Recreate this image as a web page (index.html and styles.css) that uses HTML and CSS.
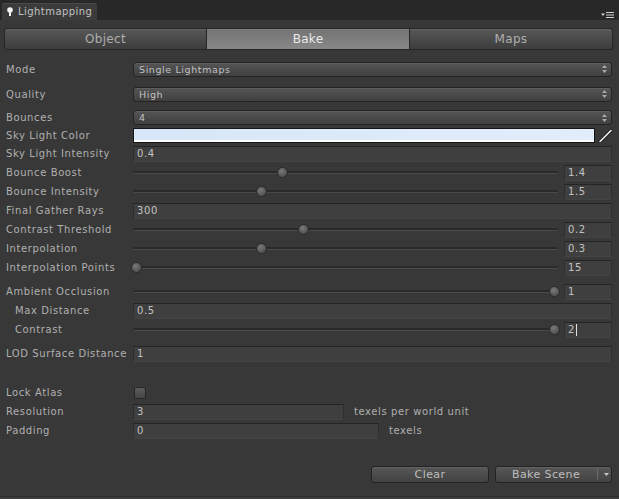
FILE: index.html
```html
<!DOCTYPE html>
<html>
<head>
<meta charset="utf-8">
<title>Lightmapping</title>
<link rel="stylesheet" href="styles.css">
</head>
<body>
<div class="window">
  <div class="tabstrip">
    <div class="wtab">
      <svg class="bulb" width="6" height="10" viewBox="0 0 6 10"><circle cx="3" cy="3" r="2.8" fill="#f2f2f2"/><rect x="2" y="5" width="2" height="4" fill="#f2f2f2"/></svg>
      <span>Lightmapping</span>
    </div>
    <svg class="menu" width="13" height="6" viewBox="0 0 13 6"><path d="M0 1.5h4L2 4z" fill="#d0d0d0"/><rect x="5" y="0" width="8" height="1" fill="#d0d0d0"/><rect x="5" y="2.5" width="8" height="1" fill="#d0d0d0"/><rect x="5" y="5" width="8" height="1" fill="#d0d0d0"/></svg>
  </div>

  <div class="toolbar">
    <div class="tb first">Object</div>
    <div class="tb on">Bake</div>
    <div class="tb last">Maps</div>
  </div>

  <div class="form">
    <div class="row h20"><span class="lbl">Mode</span><div class="popup"><span>Single Lightmaps</span><svg class="updn" width="5" height="8" viewBox="0 0 5 8"><path d="M0 3h5L2.5 0z M0 5h5L2.5 8z" fill="#a8a8a8"/></svg></div></div>
    <div class="row h20 mt5"><span class="lbl">Quality</span><div class="popup"><span>High</span><svg class="updn" width="5" height="8" viewBox="0 0 5 8"><path d="M0 3h5L2.5 0z M0 5h5L2.5 8z" fill="#a8a8a8"/></svg></div></div>
    <div class="row mt4"><span class="lbl">Bounces</span><div class="popup"><span>4</span><svg class="updn" width="5" height="8" viewBox="0 0 5 8"><path d="M0 3h5L2.5 0z M0 5h5L2.5 8z" fill="#a8a8a8"/></svg></div></div>
    <div class="row h17"><span class="lbl">Sky Light Color</span><div class="color"><div class="swatch"></div><div class="alpha"></div></div>
      <svg class="picker" width="15" height="15" viewBox="0 0 15 15"><path d="M2 13.5L13 2.5" stroke="#1e1e1e" stroke-width="3.2" stroke-linecap="round"/><path d="M2 13.5L13 2.5" stroke="#f4f4f4" stroke-width="1.6" stroke-linecap="round"/></svg>
    </div>
    <div class="row"><span class="lbl">Sky Light Intensity</span><div class="field grow">0.4</div></div>
    <div class="row"><span class="lbl">Bounce Boost</span><div class="slider"><div class="track"></div><div class="knob" style="--p:0.35"></div></div><div class="field num">1.4</div></div>
    <div class="row"><span class="lbl">Bounce Intensity</span><div class="slider"><div class="track"></div><div class="knob" style="--p:0.3"></div></div><div class="field num">1.5</div></div>
    <div class="row"><span class="lbl">Final Gather Rays</span><div class="field grow">300</div></div>
    <div class="row"><span class="lbl">Contrast Threshold</span><div class="slider"><div class="track"></div><div class="knob" style="--p:0.4"></div></div><div class="field num">0.2</div></div>
    <div class="row"><span class="lbl">Interpolation</span><div class="slider"><div class="track"></div><div class="knob" style="--p:0.3"></div></div><div class="field num">0.3</div></div>
    <div class="row"><span class="lbl">Interpolation Points</span><div class="slider"><div class="track"></div><div class="knob" style="--p:0"></div></div><div class="field num">15</div></div>

    <div class="row mt5"><span class="lbl">Ambient Occlusion</span><div class="slider"><div class="track"></div><div class="knob" style="--p:1"></div></div><div class="field num">1</div></div>
    <div class="row"><span class="lbl ind">Max Distance</span><div class="field grow">0.5</div></div>
    <div class="row"><span class="lbl ind">Contrast</span><div class="slider"><div class="track"></div><div class="knob" style="--p:1"></div></div><div class="field num">2<span class="caret"></span></div></div>

    <div class="row mt5"><span class="lbl">LOD Surface Distance</span><div class="field grow">1</div></div>

    <div class="row mt20"><span class="lbl">Lock Atlas</span><div class="check"></div></div>
    <div class="row"><span class="lbl">Resolution</span><div class="field w211">3</div><span class="suffix">texels per world unit</span></div>
    <div class="row"><span class="lbl">Padding</span><div class="field w246">0</div><span class="suffix">texels</span></div>
  </div>

  <div class="actions">
    <div class="btn clear">Clear</div>
    <div class="btn split"><span class="btxt">Bake Scene</span><span class="sep"></span><svg class="dd" width="5" height="3" viewBox="0 0 5 3"><path d="M0 0h5L2.5 3z" fill="#c8c8c8"/></svg></div>
  </div>
  <div class="footline"></div>
</div>
</body>
</html>
```

FILE: styles.css
```css
html, body {
  margin: 0;
  padding: 0;
}
body {
  background: #383838;
  font-family: "DejaVu Sans", "Liberation Sans", sans-serif;
  font-size: 10px;
  letter-spacing: 0.6px;
  color: #b0b0b0;
}
.window {
  width: 619px;
  height: 499px;
  overflow: hidden;
  display: flex;
  flex-direction: column;
  background: #383838;
}

/* window tab strip */
.tabstrip {
  height: 20px;
  background: #282828;
  display: flex;
  align-items: flex-end;
  justify-content: space-between;
  padding-left: 2px;
  padding-right: 5px;
  box-sizing: border-box;
  flex: none;
}
.wtab {
  width: 95px;
  height: 17px;
  background: #3b3b3b;
  border-radius: 3px 3px 0 0;
  box-shadow: inset 0 1px 0 #4a4a4a;
  display: flex;
  align-items: center;
  padding-left: 5px;
  gap: 5px;
  box-sizing: border-box;
  color: #c2c2c2;
  letter-spacing: 0.45px;
}
.bulb { flex: none; }
.menu {
  align-self: flex-start;
  margin-top: 12px;
}

/* toolbar */
.toolbar {
  margin: 8px 6px 0 4px;
  height: 22px;
  display: grid;
  grid-template-columns: 1fr 1fr 1fr;
  flex: none;
}
.tb {
  display: flex;
  align-items: center;
  justify-content: center;
  font-size: 12px;
  letter-spacing: 0.3px;
  color: #aeaeae;
  background: linear-gradient(#575757, #3d3d3d);
  border: 1px solid #262626;
  border-left: none;
  box-shadow: inset 0 1px 0 #636363;
}
.tb.first {
  border-left: 1px solid #262626;
  border-radius: 3px 0 0 3px;
}
.tb.last { border-radius: 0 3px 3px 0; }
.tb.on {
  background: linear-gradient(#737373, #888888);
  color: #eaeaea;
  box-shadow: inset 0 1px 0 #7e7e7e;
}

/* form rows */
.form {
  margin-top: 9px;
  display: flex;
  flex-direction: column;
  flex: none;
}
.row {
  height: 19px;
  display: flex;
  align-items: center;
  padding: 0 7px 0 5px;
  flex: none;
}
.h20 { height: 20px; }
.h17 { height: 17px; }
.mt4 { margin-top: 4px; }
.mt5 { margin-top: 5px; }
.mt20 { margin-top: 20px; }
.lbl {
  width: 128px;
  flex: none;
  white-space: nowrap;
  padding-left: 1px;
  box-sizing: border-box;
}
.lbl.ind { padding-left: 10px; }

.popup {
  flex: 1;
  height: 15px;
  box-sizing: border-box;
  border: 1px solid #232323;
  border-radius: 3px;
  background: linear-gradient(#555555, #404040);
  box-shadow: inset 0 1px 0 #5e5e5e;
  display: flex;
  align-items: center;
  justify-content: space-between;
  padding: 0 4px 0 5px;
  color: #c0c0c0;
  font-size: 9.5px;
}
.updn { flex: none; }

.color {
  flex: 1;
  height: 15px;
  box-sizing: border-box;
  border: 1px solid #151515;
  display: flex;
  flex-direction: column;
  background: #dbe8f9;
}
.swatch {
  flex: 1;
  background: linear-gradient(90deg, #d7e6f8, #e2edfb);
}
.alpha {
  height: 2px;
  background: #ffffff;
}
.picker {
  flex: none;
  margin-left: 3px;
  margin-right: -1px;
}

.field {
  height: 16px;
  box-sizing: border-box;
  background: #3f3f3f;
  border: 1px solid #2e2e2e;
  border-top-color: #242424;
  border-bottom-color: #444444;
  padding: 0 3px;
  line-height: 14px;
  color: #c2c2c2;
  white-space: nowrap;
  display: flex;
  align-items: center;
}
.grow { flex: 1; }
.num {
  width: 48px;
  flex: none;
  margin-left: 6px;
}
.w211 { width: 211px; flex: none; }
.w246 { width: 246px; flex: none; }
.suffix {
  margin-left: 10px;
  white-space: nowrap;
  color: #b0b0b0;
}
.caret {
  display: inline-block;
  width: 1px;
  height: 12px;
  background: #e0e0e0;
  margin-left: 1px;
}

.slider {
  flex: 1;
  height: 19px;
  position: relative;
  display: flex;
  align-items: center;
}
.track {
  width: 100%;
  height: 3px;
  box-sizing: border-box;
  background: #2a2a2a;
  border-bottom: 1px solid #4a4a4a;
  border-radius: 2px;
}
.knob {
  position: absolute;
  top: 4px;
  left: calc(var(--p) * (100% - 7px) - 2px);
  width: 11px;
  height: 11px;
  box-sizing: border-box;
  border-radius: 50%;
  border: 1px solid #2a2a2a;
  background: radial-gradient(circle at 40% 35%, #7a7a7a, #575757 60%, #474747);
}

.check {
  width: 12px;
  height: 12px;
  box-sizing: border-box;
  margin-left: 1px;
  border: 1px solid #262626;
  border-radius: 2px;
  background: linear-gradient(#5d5d5d, #444444);
}

/* bottom buttons */
.actions {
  margin-top: 26px;
  height: 17px;
  display: flex;
  justify-content: flex-end;
  gap: 6px;
  padding-right: 7px;
  flex: none;
}
.btn {
  height: 17px;
  box-sizing: border-box;
  border: 1px solid #232323;
  border-radius: 3px;
  background: linear-gradient(#575757, #424242);
  box-shadow: inset 0 1px 0 #626262;
  display: flex;
  align-items: center;
  font-size: 11px;
  letter-spacing: 0.4px;
  color: #bebebe;
}
.btn.clear {
  width: 118px;
  justify-content: center;
}
.btn.split {
  width: 117px;
  padding-left: 16px;
}
.btxt { width: 84px; white-space: nowrap; }
.sep {
  width: 1px;
  height: 11px;
  background: #6a6a6a;
  margin-left: 1px;
}
.dd { margin-left: 6px; }

.footline {
  margin-top: 13px;
  height: 1px;
  background: #2c2c2c;
  border-bottom: 1px solid #3e3e3e;
  flex: none;
}
```
